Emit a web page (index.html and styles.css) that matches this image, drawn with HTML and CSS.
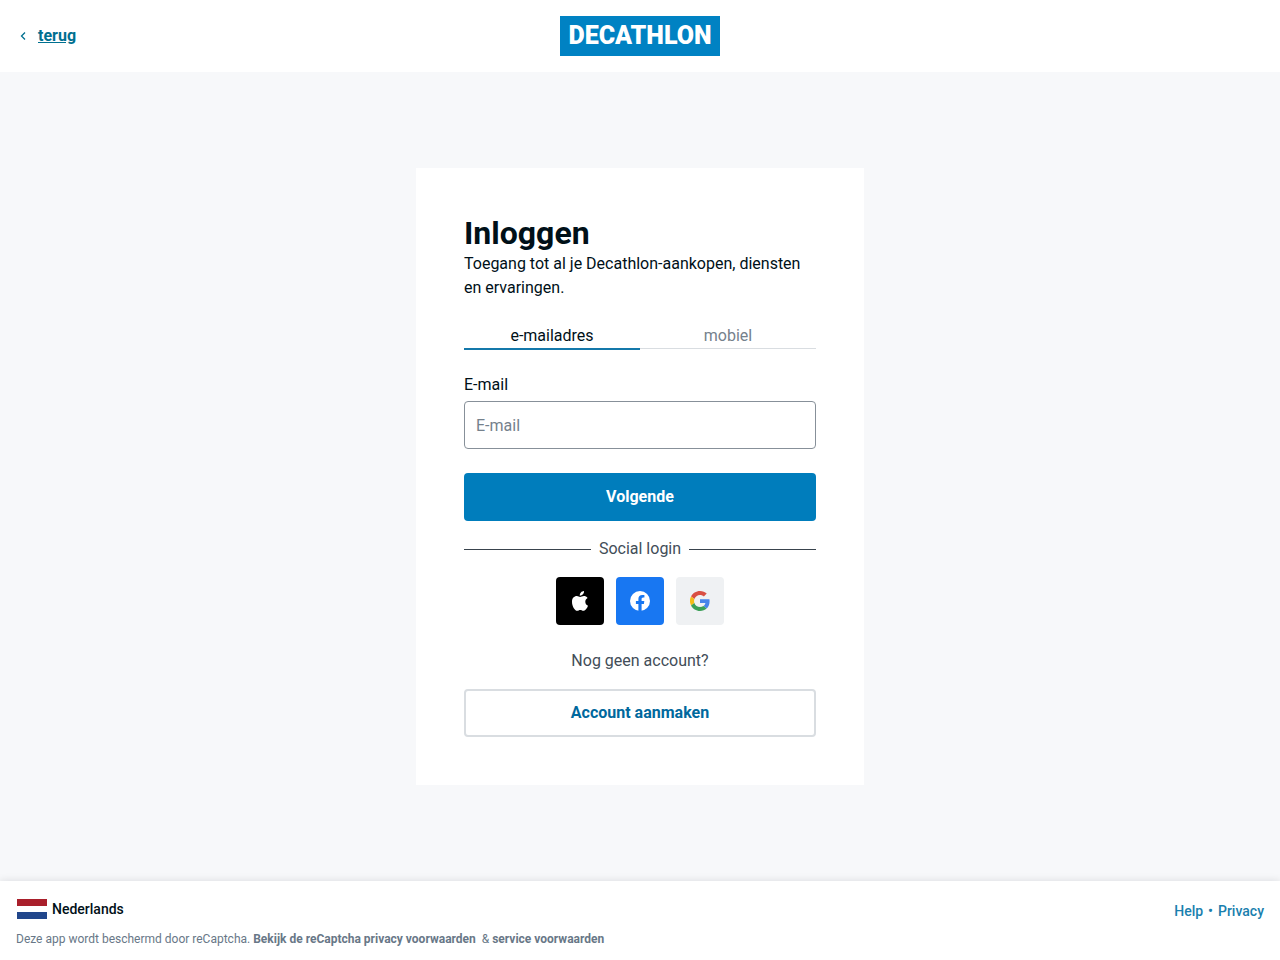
FILE: index.html
```html
<!DOCTYPE html>
<html lang="nl">
	<head>
		<meta charset="utf-8">
		<meta name="viewport" content="width=device-width, initial-scale=1">
		<title>Inloggen</title>
		<link rel="stylesheet" href="styles.css">
	</head>
	<body>
		<div class="wrapper">

			<header class="header">
				<a href="#" class="back">
					<svg width="14" height="14" viewBox="0 0 14 14" aria-hidden="true"><path d="M9 3.500 5.500 7 9 10.500" fill="none" stroke="currentColor" stroke-width="1.300"/></svg>
					<span>terug</span>
				</a>
				<div class="logo">DECATHLON</div>
			</header>

			<main class="main">
				<div class="card">
					<h1>Inloggen</h1>
					<p class="intro">Toegang tot al je Decathlon-aankopen, diensten en ervaringen.</p>

					<div class="tabs" role="tablist">
						<button type="button" class="tab active" role="tab" aria-selected="true">e-mailadres</button>
						<button type="button" class="tab" role="tab" aria-selected="false">mobiel</button>
					</div>

					<form class="login">
						<label for="email">E-mail</label>
						<input type="email" id="email" name="email" placeholder="E-mail">
						<button type="submit" class="btn btn-primary">Volgende</button>
					</form>

					<div class="divider"><span>Social login</span></div>

					<div class="social">
						<button type="button" class="social-btn apple">
							<svg width="24" height="24" viewBox="0 0 24 24" aria-hidden="true"><path fill="#fff" d="M12.100 7.900c-.9 0-1.900-.8-3.200-.8C6.100 7.100 4 9.300 4 12.700 4 17 6.700 21.800 9.200 21.800c1.200 0 1.700-.8 3.100-.8s1.900.8 3.100.8c2 0 3.900-3 4.600-5.100-1.700-.7-2.700-2.100-2.700-4 0-1.700.9-3 2.300-3.800-1-1.200-2.400-1.800-3.700-1.800-1.600 0-2.700.8-3.800.8ZM11.800 6.700C11.600 4.200 13.600 2.100 16 2c.3 2.500-1.800 4.800-4.200 4.700Z"/></svg>
						</button>
						<button type="button" class="social-btn facebook">
							<svg width="24" height="24" viewBox="0 0 24 24" aria-hidden="true"><circle cx="12" cy="12" r="10" fill="#fff"/><path fill="#1877f2" d="M10.400 22v-7H7.900v-3h2.500V9.800c0-2.500 1.500-3.900 3.800-3.900 1.100 0 2.200.2 2.200.2v2.500h-1.200c-1.200 0-1.600.8-1.600 1.500V12h2.700l-.4 3h-2.300v7Z"/></svg>
						</button>
						<button type="button" class="social-btn google">
							<svg width="20" height="20" viewBox="0 0 48 48" aria-hidden="true">
								<path fill="#d94f43" d="M24 9.500c3.500 0 6.700 1.200 9.200 3.600l6.900-6.900C35.900 2.400 30.500 0 24 0 14.600 0 6.500 5.400 2.600 13.200l8 6.200C12.400 13.700 17.700 9.500 24 9.500z"/>
								<path fill="#4784ea" d="M47 24.600c0-1.600-.2-3.100-.4-4.600H24v9h12.900c-.6 3-2.200 5.500-4.700 7.200l7.700 6C44.400 38 47 32 47 24.600z"/>
								<path fill="#f4bc18" d="M10.500 28.600a14.500 14.500 0 0 1 0-9.200l-8-6.200a24 24 0 0 0 0 21.600z"/>
								<path fill="#3b9f57" d="M24 48c6.500 0 11.900-2.100 15.900-5.800l-7.700-6c-2.100 1.400-4.900 2.300-8.200 2.300-6.300 0-11.600-4.200-13.500-9.900l-8 6.200C6.500 42.600 14.600 48 24 48z"/>
							</svg>
						</button>
					</div>

					<p class="no-account">Nog geen account?</p>
					<button type="button" class="btn btn-outline">Account aanmaken</button>
				</div> <!-- end .card -->
			</main>

			<footer class="footer">
				<div class="footer-left">
					<button type="button" class="country">
						<svg width="32" height="20" viewBox="0 0 32 20" aria-hidden="true">
							<path fill="#fff" d="M1 0h30v20H1z"/>
							<path fill="#a91f2b" d="M1 0h30v7H1z"/>
							<path fill="#21468b" d="M1 13h30v7H1z"/>
						</svg>
						<span>Nederlands</span>
					</button>
					<p class="captcha">Deze app wordt beschermd door reCaptcha. <a href="#">Bekijk de reCaptcha privacy voorwaarden</a>&nbsp; &amp; <a href="#">service voorwaarden</a></p>
				</div>
				<nav class="footer-links">
					<a href="#">Help</a>
					<span>•</span>
					<a href="#">Privacy</a>
				</nav>
			</footer>

		</div> <!-- end .wrapper -->
	</body>
</html>
```

FILE: styles.css
```css
* {
	box-sizing: border-box;
}

body {
	margin: 0;
	background: #f7f8fa;
	color: #001018;
	font-family: Roboto, "Liberation Sans", sans-serif;
	font-size: 16px;
	line-height: 24px;
}

h1, p {
	margin: 0;
}

button, input {
	font: inherit;
}

button {
	padding: 0;
	border: 0;
	background: none;
	color: inherit;
	cursor: pointer;
}

svg {
	display: block;
}

.wrapper {
	display: flex;
	flex-direction: column;
	min-height: 100vh;
}

/* header */

.header {
	display: grid;
	grid-template-columns: 1fr auto 1fr;
	align-items: center;
	padding: 16px;
	background: #fff;
}

.back {
	display: flex;
	align-items: center;
	gap: 8px;
	color: #007090;
	font-weight: 700;
	text-decoration: none;
}

.back span {
	text-decoration: underline;
}

.logo {
	width: 160px;
	background: #0082c3;
	color: #fff;
	font-size: 25px;
	font-weight: 900;
	line-height: 40px;
	text-align: center;
}

/* login card */

.main {
	flex: 1;
	padding: 96px 16px;
}

.card {
	max-width: 448px;
	margin: 0 auto;
	padding: 48px;
	background: #fff;
}

.card h1 {
	margin-bottom: 2px;
	font-size: 32px;
	line-height: 34px;
}

.tabs {
	display: flex;
	margin: 24px 0;
	border-bottom: 1px solid #d9dde1;
}

.tab {
	flex: 1;
	color: #75818c;
}

.tab.active {
	margin-bottom: -2px;
	border-bottom: 2px solid #1478aa;
	color: #001018;
}

.login {
	display: flex;
	flex-direction: column;
}

.login input {
	height: 48px;
	margin: 4px 0 24px;
	padding: 0 11px;
	border: 1px solid #879099;
	border-radius: 4px;
	background: #fff;
	color: #001018;
}

.login input::placeholder {
	color: #75818c;
}

.btn {
	width: 100%;
	height: 48px;
	border-radius: 4px;
	font-weight: 700;
}

.btn-primary {
	background: #007dbc;
	color: #fff;
}

.btn-outline {
	border: 2px solid #d9dde1;
	color: #00689d;
}

.divider {
	display: flex;
	align-items: center;
	gap: 8px;
	margin: 16px 0;
	color: #424d58;
}

.divider::before,
.divider::after {
	content: "";
	flex: 1;
	height: 1px;
	background: #39434d;
}

.social {
	display: flex;
	justify-content: center;
	gap: 12px;
}

.social-btn {
	display: flex;
	align-items: center;
	justify-content: center;
	width: 48px;
	height: 48px;
	border-radius: 4px;
}

.apple {
	background: #000;
}

.facebook {
	background: #1877f2;
}

.google {
	background: #eff1f3;
}

.no-account {
	margin: 24px 0 16px;
	color: #424d58;
	text-align: center;
}

/* footer */

.footer {
	display: flex;
	justify-content: space-between;
	padding: 16px 16px 11px;
	background: #fff;
	box-shadow: 0 0 8px rgba(0,16,24,0.12);
	font-size: 14px;
}

.country {
	display: flex;
	align-items: center;
	gap: 4px;
	height: 24px;
	font-weight: 500;
}

.captcha {
	margin-top: 8px;
	color: #687787;
	font-size: 12px;
	line-height: 20px;
}

.captcha a {
	color: inherit;
	font-weight: 700;
	text-decoration: none;
}

.footer-links {
	display: flex;
	gap: 5px;
	color: #1a7fae;
	font-weight: 500;
	line-height: 28px;
}

.footer-links a {
	color: inherit;
	text-decoration: none;
}
```
